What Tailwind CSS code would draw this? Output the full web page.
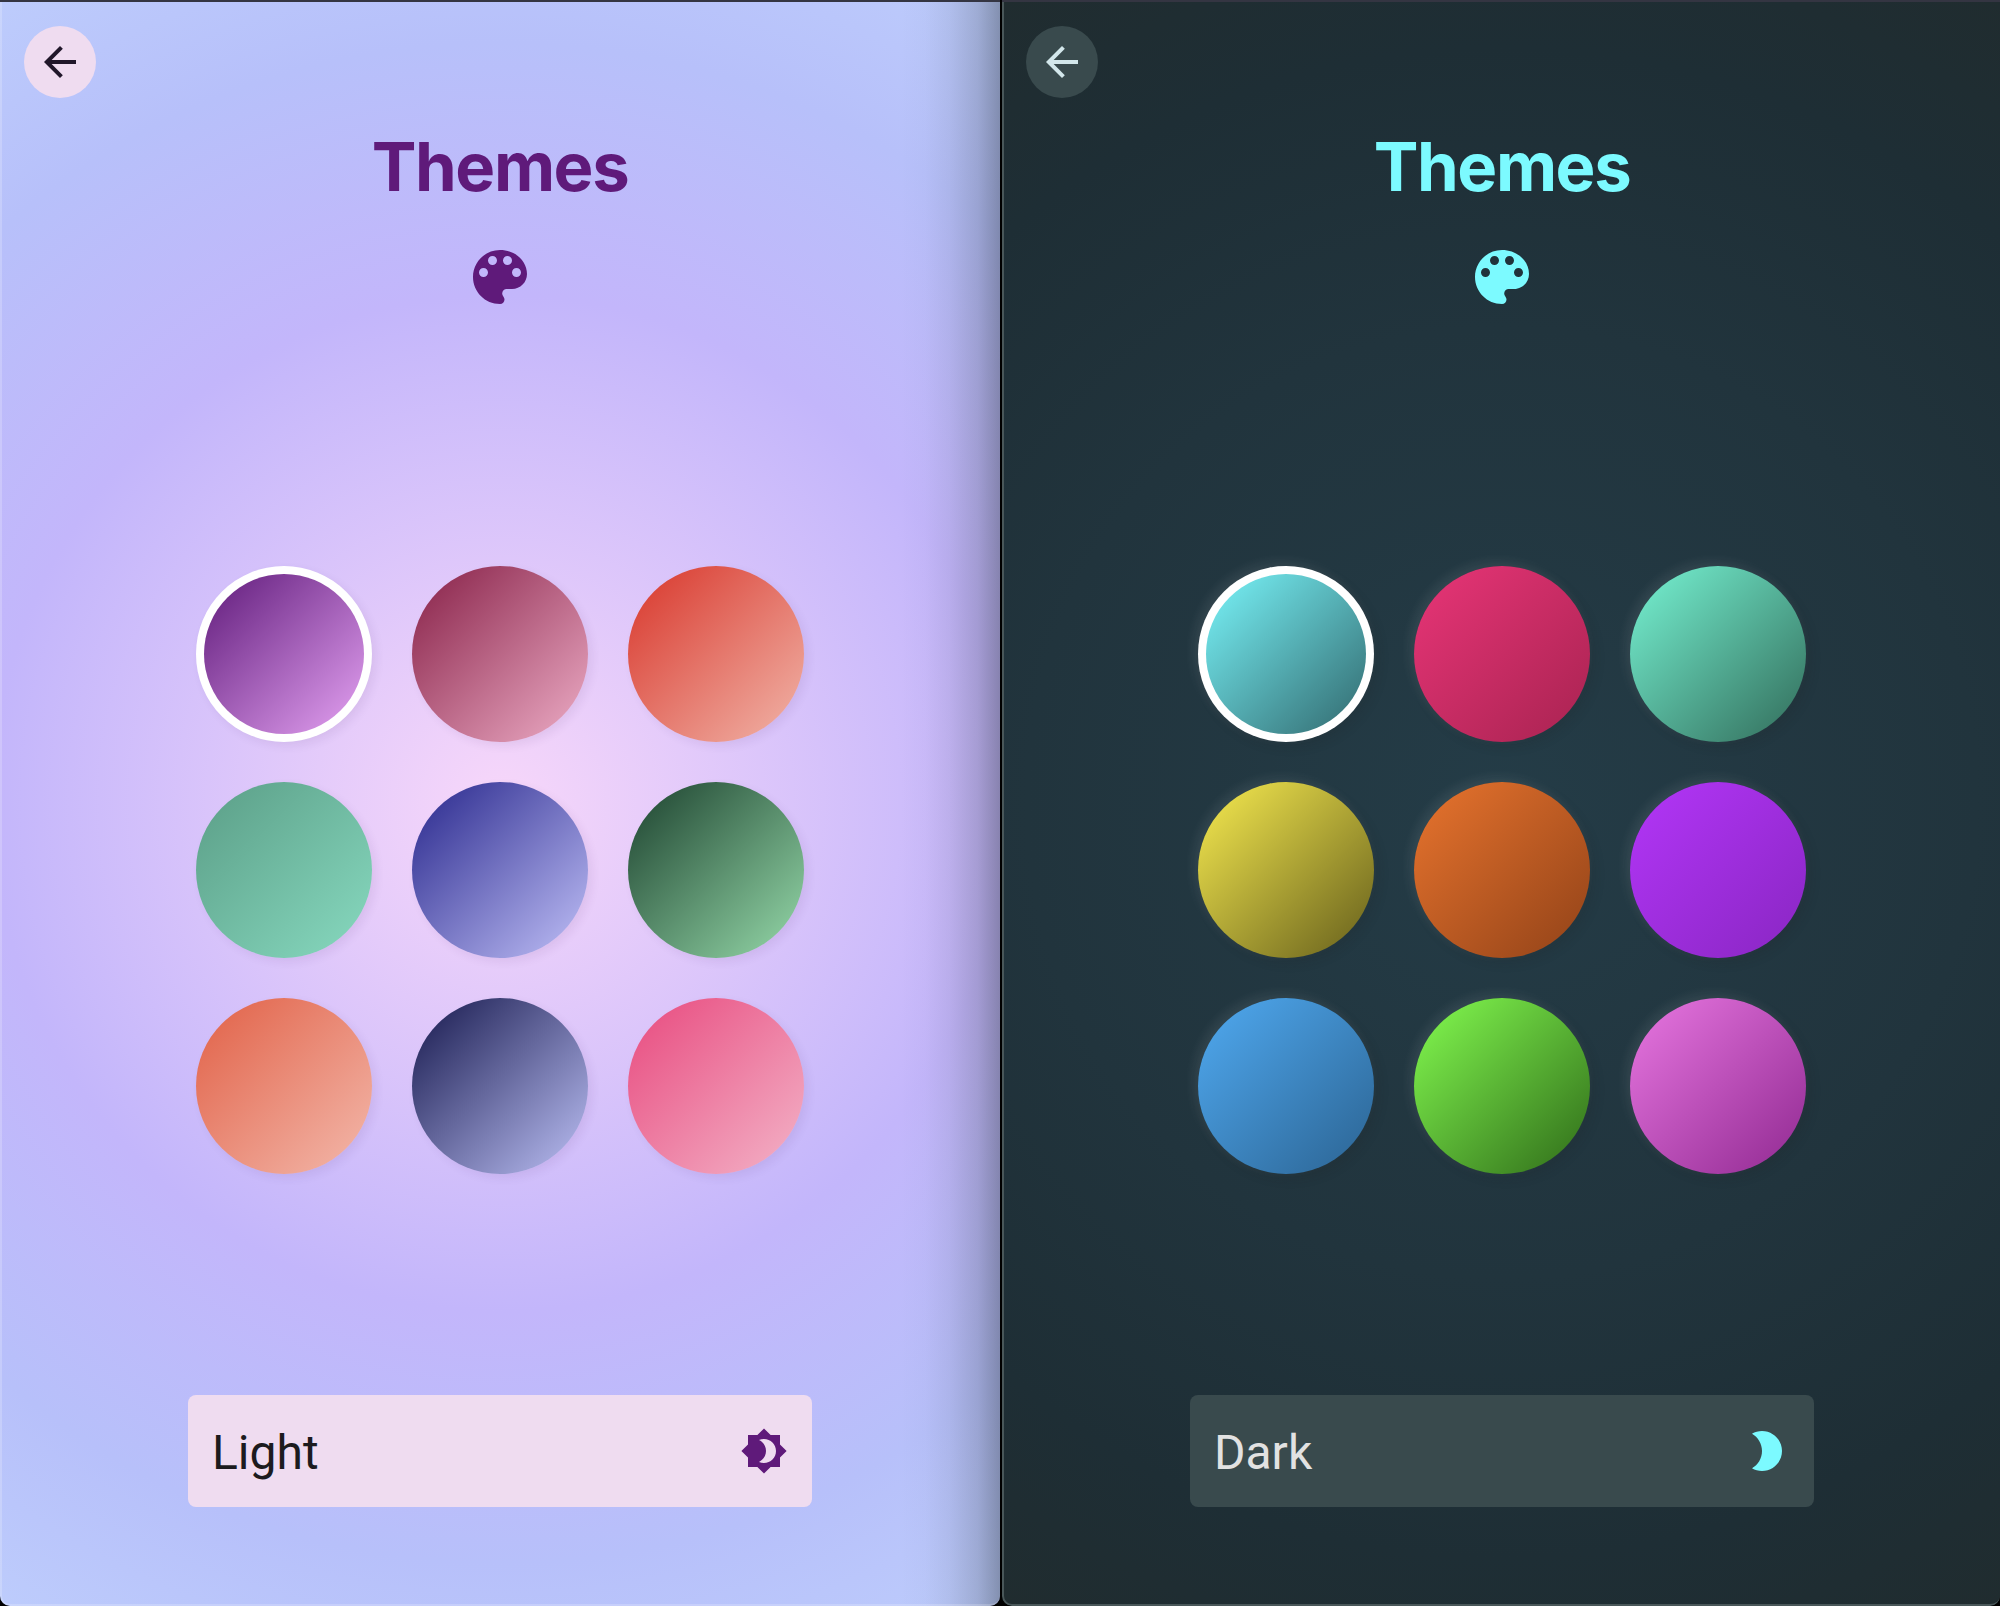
<!DOCTYPE html>
<html lang="en">
<head>
<meta charset="utf-8">
<title>Themes</title>
<script src="https://cdn.jsdelivr.net/npm/@tailwindcss/browser@4"></script>
</head>
<body class="flex h-[1606px] w-[2000px] gap-[2px] overflow-hidden bg-black">

<!-- Light theme window -->
<section class="relative flex w-[1000px] flex-col items-center overflow-hidden rounded-b-[10px] bg-[radial-gradient(circle_at_500px_803px,#f7d7fa_0px,#c3b6fb_508px,#b7c0fa_760px,#bdccfc_946px)]">
  <div class="mt-[26px] ml-6 flex size-[72px] shrink-0 items-center justify-center self-start rounded-full bg-[#efdcf0]">
    <svg class="size-12 fill-[#21172a]" viewBox="0 0 24 24"><path d="M20 11H7.83l5.59-5.59L12 4l-8 8 8 8 1.41-1.41L7.83 13H20v-2z"/></svg>
  </div>
  <h1 class="mt-[29px] h-[80px] text-[67px] leading-[80px] font-bold tracking-[-1.4px] text-[#5f1a7a] font-['Inter',sans-serif]">Themes</h1>
  <svg class="mt-[34px] size-[72px] shrink-0 fill-[#5f1a7a]" viewBox="0 0 24 24"><path d="M12 3c-4.97 0-9 4.03-9 9s4.03 9 9 9c.83 0 1.5-.67 1.5-1.5 0-.39-.15-.74-.39-1.01-.23-.26-.38-.61-.38-.99 0-.83.67-1.5 1.5-1.5H16c2.76 0 5-2.24 5-5 0-4.42-4.03-8-9-8zm-5.5 9c-.83 0-1.5-.67-1.5-1.5S5.67 9 6.5 9 8 9.67 8 10.5 7.33 12 6.5 12zm3-4C8.67 8 8 7.33 8 6.5S8.67 5 9.5 5s1.5.67 1.5 1.5S10.33 8 9.5 8zm5 0c-.83 0-1.5-.67-1.5-1.5S13.67 5 14.5 5s1.5.67 1.5 1.5S15.33 8 14.5 8zm3 4c-.83 0-1.5-.67-1.5-1.5S16.67 9 17.5 9s1.5.67 1.5 1.5-.67 1.5-1.5 1.5z"/></svg>
  <div class="mt-[253px] grid grid-cols-3 gap-10">
    <div class="size-[176px] rounded-full bg-white p-2 shadow-[4px_4px_10px_rgba(60,20,90,0.08)]"><div class="size-full rounded-full bg-[linear-gradient(135deg,#5f1a7a,#e5a3f3)]"></div></div>
    <div class="size-[176px] rounded-full bg-[linear-gradient(135deg,#861f46,#eeaec7)] shadow-[4px_4px_10px_rgba(60,20,90,0.08)]"></div>
    <div class="size-[176px] rounded-full bg-[linear-gradient(135deg,#d8352a,#f1b6aa)] shadow-[4px_4px_10px_rgba(60,20,90,0.08)]"></div>
    <div class="size-[176px] rounded-full bg-[linear-gradient(135deg,#5a9d86,#88dac0)] shadow-[4px_4px_10px_rgba(60,20,90,0.08)]"></div>
    <div class="size-[176px] rounded-full bg-[linear-gradient(135deg,#27268b,#c1c1f8)] shadow-[4px_4px_10px_rgba(60,20,90,0.08)]"></div>
    <div class="size-[176px] rounded-full bg-[linear-gradient(135deg,#1b402d,#97dbab)] shadow-[4px_4px_10px_rgba(60,20,90,0.08)]"></div>
    <div class="size-[176px] rounded-full bg-[linear-gradient(135deg,#e16046,#f3b9ac)] shadow-[4px_4px_10px_rgba(60,20,90,0.08)]"></div>
    <div class="size-[176px] rounded-full bg-[linear-gradient(135deg,#15174c,#bdc1f6)] shadow-[4px_4px_10px_rgba(60,20,90,0.08)]"></div>
    <div class="size-[176px] rounded-full bg-[linear-gradient(135deg,#e8497e,#f3b4c8)] shadow-[4px_4px_10px_rgba(60,20,90,0.08)]"></div>
  </div>
  <div class="mt-[221px] flex h-28 w-[624px] shrink-0 items-center justify-between rounded-lg bg-[#efdcf0] px-6">
    <span class="mt-[3px] text-5xl text-[#1c1b1e] font-['Roboto',sans-serif]">Light</span>
    <svg class="size-12 fill-[#5f1a7a]" viewBox="0 0 24 24"><path d="M20 15.31L23.31 12 20 8.69V4h-4.69L12 .69 8.69 4H4v4.69L.69 12 4 15.31V20h4.69L12 23.31 15.31 20H20v-4.69zM12 18c-.89 0-1.74-.2-2.5-.55C11.56 16.5 13 14.42 13 12s-1.44-4.5-3.5-5.45C10.26 6.2 11.11 6 12 6c3.31 0 6 2.69 6 6s-2.69 6-6 6z"/></svg>
  </div>
  <!-- Shadow cast by the neighbouring window, and the window frame -->
  <div class="absolute inset-y-0 right-0 w-[100px] bg-[linear-gradient(to_right,rgba(20,30,30,0)_0%,rgba(20,30,30,0.015)_25%,rgba(20,30,30,0.07)_50%,rgba(20,30,30,0.18)_78%,rgba(20,30,30,0.34)_100%)]"></div>
  <div class="absolute inset-0 rounded-b-[10px] border-b-2 border-l-2 border-white/20"></div>
  <div class="absolute inset-x-0 top-0 h-[2px] bg-[#343542]"></div>
</section>

<!-- Dark theme window -->
<section class="relative flex w-[998px] flex-col items-center overflow-hidden rounded-b-[10px] bg-[radial-gradient(circle_at_500px_803px,#243c47_0px,#21343d_475px,#1e2e35_755px,#202c2f_946px)]">
  <div class="mt-[26px] ml-6 flex size-[72px] shrink-0 items-center justify-center self-start rounded-full bg-[#394a4d]">
    <svg class="size-12 fill-[#d3e7eb]" viewBox="0 0 24 24"><path d="M20 11H7.83l5.59-5.59L12 4l-8 8 8 8 1.41-1.41L7.83 13H20v-2z"/></svg>
  </div>
  <div class="flex w-[1000px] flex-col items-center self-start">
    <h1 class="mt-[29px] h-[80px] text-[67px] leading-[80px] font-bold tracking-[-1.4px] text-[#7cfaff] font-['Inter',sans-serif]">Themes</h1>
    <svg class="mt-[34px] size-[72px] shrink-0 fill-[#7cfaff]" viewBox="0 0 24 24"><path d="M12 3c-4.97 0-9 4.03-9 9s4.03 9 9 9c.83 0 1.5-.67 1.5-1.5 0-.39-.15-.74-.39-1.01-.23-.26-.38-.61-.38-.99 0-.83.67-1.5 1.5-1.5H16c2.76 0 5-2.24 5-5 0-4.42-4.03-8-9-8zm-5.5 9c-.83 0-1.5-.67-1.5-1.5S5.67 9 6.5 9 8 9.67 8 10.5 7.33 12 6.5 12zm3-4C8.67 8 8 7.33 8 6.5S8.67 5 9.5 5s1.5.67 1.5 1.5S10.33 8 9.5 8zm5 0c-.83 0-1.5-.67-1.5-1.5S13.67 5 14.5 5s1.5.67 1.5 1.5S15.33 8 14.5 8zm3 4c-.83 0-1.5-.67-1.5-1.5S16.67 9 17.5 9s1.5.67 1.5 1.5-.67 1.5-1.5 1.5z"/></svg>
    <div class="mt-[253px] grid grid-cols-3 gap-10">
      <div class="size-[176px] rounded-full bg-white p-2 shadow-[-4px_-4px_12px_rgba(255,255,255,0.09),4px_4px_12px_rgba(30,30,30,0.16)]"><div class="size-full rounded-full bg-[linear-gradient(135deg,#79f5fa,#31686d)]"></div></div>
      <div class="size-[176px] rounded-full bg-[linear-gradient(135deg,#e83577,#a82351)] shadow-[-4px_-4px_12px_rgba(255,255,255,0.09),4px_4px_12px_rgba(30,30,30,0.16)]"></div>
      <div class="size-[176px] rounded-full bg-[linear-gradient(135deg,#77f4d4,#316b59)] shadow-[-4px_-4px_12px_rgba(255,255,255,0.09),4px_4px_12px_rgba(30,30,30,0.16)]"></div>
      <div class="size-[176px] rounded-full bg-[linear-gradient(135deg,#f8ec50,#655e1b)] shadow-[-4px_-4px_12px_rgba(255,255,255,0.09),4px_4px_12px_rgba(30,30,30,0.16)]"></div>
      <div class="size-[176px] rounded-full bg-[linear-gradient(135deg,#e8742e,#914218)] shadow-[-4px_-4px_12px_rgba(255,255,255,0.09),4px_4px_12px_rgba(30,30,30,0.16)]"></div>
      <div class="size-[176px] rounded-full bg-[linear-gradient(135deg,#b336f8,#8926c2)] shadow-[-4px_-4px_12px_rgba(255,255,255,0.09),4px_4px_12px_rgba(30,30,30,0.16)]"></div>
      <div class="size-[176px] rounded-full bg-[linear-gradient(135deg,#50aaf1,#2b6392)] shadow-[-4px_-4px_12px_rgba(255,255,255,0.09),4px_4px_12px_rgba(30,30,30,0.16)]"></div>
      <div class="size-[176px] rounded-full bg-[linear-gradient(135deg,#84fc50,#2f6b19)] shadow-[-4px_-4px_12px_rgba(255,255,255,0.09),4px_4px_12px_rgba(30,30,30,0.16)]"></div>
      <div class="size-[176px] rounded-full bg-[linear-gradient(135deg,#e877e1,#902991)] shadow-[-4px_-4px_12px_rgba(255,255,255,0.09),4px_4px_12px_rgba(30,30,30,0.16)]"></div>
    </div>
    <div class="mt-[221px] flex h-28 w-[624px] shrink-0 items-center justify-between rounded-lg bg-[#394a4d] px-6">
      <span class="mt-[3px] text-5xl text-[#e2e2e2] font-['Roboto',sans-serif]">Dark</span>
      <svg class="size-12 fill-[#7cfaff]" viewBox="0 0 24 24"><path d="M10 2c-1.82 0-3.53.5-5 1.35C7.99 5.08 10 8.3 10 12s-2.01 6.92-5 8.65C6.47 21.5 8.18 22 10 22c5.52 0 10-4.48 10-10S15.52 2 10 2z"/></svg>
    </div>
  </div>
  <div class="absolute inset-0 rounded-b-[10px] border-b-2 border-l-2 border-[#495759]"></div>
  <div class="absolute inset-x-0 top-0 h-[2px] bg-[#343542]"></div>
</section>
</body>
</html>
